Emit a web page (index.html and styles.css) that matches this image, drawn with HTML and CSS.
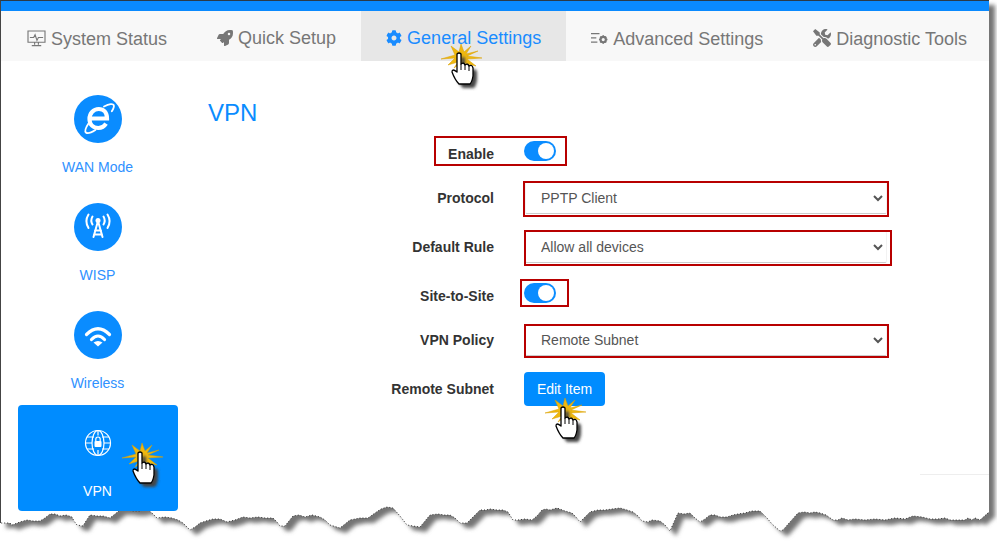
FILE: index.html
```html
<!DOCTYPE html>
<html lang="en">
<head>
<meta charset="utf-8">
<title>VPN</title>
<link rel="stylesheet" href="styles.css">
</head>
<body>
<div class="stage">
  <svg class="tear" width="997" height="542" viewBox="0 0 997 542">
    <defs>
      <filter id="soft" x="-5%" y="-5%" width="110%" height="110%"><feGaussianBlur stdDeviation="2"/></filter>
      <filter id="softer" x="-50%" y="-50%" width="200%" height="200%"><feGaussianBlur stdDeviation="1.5"/></filter>
      <path id="sheet" d="M0 0H989V512L980 520 975 518 972 520 968 518 965 520 960 520 950 520 945 518 938 519 930 519 922 517 913 516 905 519 895 518 885 520 875 519 865 520 855 519 848 520 842 518 838 520 833 520 826 515 820 513 815 512 810 513 804 512 798 513 790 522 783 530 780 531 772 524 767 518 760 511 752 511 745 513 738 514 733 515 727 517 720 517 715 515 710 515 705 519 700 522 695 518 690 513 684 514 678 513 674 522 670 531 665 525 660 521 652 520 648 522 642 521 638 516 633 512 627 510 620 508 612 509 605 510 598 510 590 512 585 517 580 522 576 517 572 513 565 511 557 508 550 510 546 509 542 510 537 516 532 520 525 519 518 520 513 520 508 512 503 510 497 510 490 509 486 510 480 510 473 517 467 523 460 523 455 518 450 515 444 515 438 514 430 515 425 521 420 527 413 526 407 525 400 516 393 508 387 507 381 509 375 513 368 518 360 518 350 520 345 524 340 528 330 525 325 520 320 517 312 515 305 517 299 515 293 516 289 521 285 526 280 526 277 522 273 518 265 518 258 517 250 518 243 517 235 520 227 522 220 519 213 519 206 521 200 523 195 527 190 530 186 526 183 523 178 520 172 518 165 517 157 518 152 513 147 509 140 511 133 511 127 510 120 510 115 514 110 518 103 516 97 516 90 515 86 521 83 526 77 525 74 521 72 517 66 515 60 516 55 514 50 514 45 518 40 521 33 521 27 520 20 522 12 525 10 523H0Z"/>
      <path id="edge" d="M988 513L980 520 975 518 972 520 968 518 965 520 960 520 950 520 945 518 938 519 930 519 922 517 913 516 905 519 895 518 885 520 875 519 865 520 855 519 848 520 842 518 838 520 833 520 826 515 820 513 815 512 810 513 804 512 798 513 790 522 783 530 780 531 772 524 767 518 760 511 752 511 745 513 738 514 733 515 727 517 720 517 715 515 710 515 705 519 700 522 695 518 690 513 684 514 678 513 674 522 670 531 665 525 660 521 652 520 648 522 642 521 638 516 633 512 627 510 620 508 612 509 605 510 598 510 590 512 585 517 580 522 576 517 572 513 565 511 557 508 550 510 546 509 542 510 537 516 532 520 525 519 518 520 513 520 508 512 503 510 497 510 490 509 486 510 480 510 473 517 467 523 460 523 455 518 450 515 444 515 438 514 430 515 425 521 420 527 413 526 407 525 400 516 393 508 387 507 381 509 375 513 368 518 360 518 350 520 345 524 340 528 330 525 325 520 320 517 312 515 305 517 299 515 293 516 289 521 285 526 280 526 277 522 273 518 265 518 258 517 250 518 243 517 235 520 227 522 220 519 213 519 206 521 200 523 195 527 190 530 186 526 183 523 178 520 172 518 165 517 157 518 152 513 147 509 140 511 133 511 127 510 120 510 115 514 110 518 103 516 97 516 90 515 86 521 83 526 77 525 74 521 72 517 66 515 60 516 55 514 50 514 45 518 40 521 33 521 27 520 20 522 12 525 10 523H0"/>
      <g id="hand">
        <polygon class="burst" transform="translate(2 3)" points="21,2 6,3 15,10 3,7 6,14 0,7 -7,12 -3,6 -13,9 -6,2 -20,3 -6,-1 -10,-10 -2,-4 0,-12 3,-4 10,-10 5,-2 17,-5 6,0"/>
        <path class="hand-shadow" filter="url(#softer)" transform="translate(4 4)" d="M-2 1Q0-1 2 1L2 11Q5 9 6 12Q9 10 10 13Q13 11 14 15L14 23Q13 29 11 31L0 31Q-4 27-7 19Q-7 15-2 19Z"/>
        <path class="hand-body" d="M-2 1Q0-1 2 1L2 11Q5 9 6 12Q9 10 10 13Q13 11 14 15L14 23Q13 29 11 31L0 31Q-4 27-7 19Q-7 15-2 19Z"/>
        <path class="hand-line" d="M2 11V17M6 12V17M10 13V18"/>
      </g>
    </defs>
    <use href="#sheet" class="sheet-shadow" transform="translate(6 5)" filter="url(#soft)"/>
    <use href="#sheet" class="sheet"/>
    <use href="#edge" class="sheet-edge"/>
  </svg>

  <div class="window">
    <div class="topbar"></div>
    <nav class="tabs">
      <a class="tab">
        <svg class="ic ic-monitor" viewBox="0 0 20 18"><path class="ln" d="M1 1h18v12H1zM8 13v2.500M12 13v2.500M5 16.500h10M3 8h4l1.500-3 2 6 1.500-3h5"/></svg>
        <span class="tab-text tab-low">System Status</span>
      </a>
      <a class="tab">
        <svg class="ic ic-rocket" viewBox="0 0 512 512"><path d="M505.05 19.1a15.89 15.89 0 0 0-12.2-12.2C460.65 0 435.46 0 410.36 0c-103.2 0-165.1 55.2-211.29 128H94.87A48 48 0 0 0 52 154.49l-49.42 98.8A24 24 0 0 0 24.07 288h103.77l-22.47 22.47a32 32 0 0 0 0 45.25l50.9 50.91a32 32 0 0 0 45.26 0L224 384.16V488a24 24 0 0 0 34.7 21.49l98.7-49.39a47.91 47.91 0 0 0 26.5-42.9V312.79c72.59-46.3 128-108.4 128-211.09.1-25.2.1-50.4-6.85-82.6zM384 168a40 40 0 1 1 40-40 40 40 0 0 1-40 40z"/></svg>
        <span class="tab-text">Quick Setup</span>
      </a>
      <a class="tab tab-active">
        <svg class="ic ic-gear" viewBox="0 0 512 512"><path d="M487.4 315.7l-42.6-24.6c4.3-23.2 4.3-47 0-70.2l42.6-24.6c4.9-2.8 7.1-8.6 5.500-14-11.1-35.6-30-67.8-54.7-94.6-3.8-4.1-10-5.100-14.8-2.300L380.8 110c-17.9-15.4-38.5-27.3-60.8-35.1V25.800c0-5.600-3.900-10.500-9.400-11.700-36.700-8.200-74.300-7.800-109.200 0-5.500 1.200-9.400 6.100-9.400 11.700V75c-22.200 7.900-42.800 19.800-60.800 35.100L88.700 85.500c-4.900-2.800-11-1.900-14.800 2.300-24.700 26.700-43.600 58.900-54.700 94.600-1.700 5.400.6 11.200 5.500 14L67.300 221c-4.300 23.200-4.300 47 0 70.200l-42.600 24.600c-4.900 2.800-7.100 8.600-5.500 14 11.100 35.600 30 67.800 54.700 94.600 3.800 4.100 10 5.100 14.800 2.300l42.600-24.600c17.900 15.400 38.500 27.300 60.800 35.100v49.200c0 5.600 3.900 10.500 9.400 11.700 36.700 8.200 74.300 7.800 109.200 0 5.500-1.200 9.400-6.100 9.400-11.700v-49.200c22.200-7.900 42.800-19.800 60.800-35.100l42.600 24.600c4.900 2.800 11 1.900 14.800-2.300 24.700-26.700 43.600-58.900 54.700-94.600 1.500-5.500-.7-11.300-5.600-14.100zM256 336c-44.100 0-80-35.900-80-80s35.900-80 80-80 80 35.900 80 80-35.900 80-80 80z"/></svg>
        <span class="tab-text">General Settings</span>
      </a>
      <a class="tab">
        <svg class="ic ic-adv" viewBox="0 0 16 12"><path class="ln" d="M0 1.500h8M0 5.500h5M0 9.500h6"/><circle class="cog-ring" cx="11.500" cy="7" r="2.500"/><path class="ln cog-teeth" d="M11.500 3v1.500M11.500 9.500V11M7.500 7H9M14 7h1.500M8.700 4.200l1 1M13.300 8.800l1 1M14.300 4.200l-1 1M9.700 8.800l-1 1"/></svg>
        <span class="tab-text tab-low">Advanced Settings</span>
      </a>
      <a class="tab">
        <svg class="ic ic-tools" viewBox="0 0 512 512"><path d="M501.1 395.7L384 278.6c-23.1-23.1-57.6-27.6-85.4-13.9L192 158.1V96L64 0 0 64l96 128h62.1l106.6 106.6c-13.6 27.8-9.2 62.3 13.9 85.4l117.1 117.1c14.6 14.6 38.2 14.6 52.7 0l52.7-52.7c14.5-14.6 14.5-38.2 0-52.7zM331.7 225c28.3 0 54.9 11 74.9 31l19.4 19.4c15.8-6.9 30.8-16.5 43.8-29.5 37.1-37.1 49.7-89.3 37.9-136.7-2.2-9-13.5-12.1-20.1-5.5l-74.4 74.4-67.9-11.3L334 98.9l74.4-74.4c6.6-6.6 3.4-17.9-5.7-20.2-47.4-11.7-99.6.9-136.6 37.9-28.5 28.5-41.9 66.1-41.2 103.6l82.1 82.1c8.1-1.9 16.5-2.9 24.7-2.9zm-103.9 82l-56.7-56.7L18.7 402.8c-25 25-25 65.5 0 90.5s65.5 25 90.5 0l123.6-123.6c-7.6-19.9-9.900-41.6-5-62.7zM64 472c-13.2 0-24-10.8-24-24 0-13.300 10.700-24 24-24s24 10.700 24 24c0 13.200-10.700 24-24 24z"/></svg>
        <span class="tab-text tab-low">Diagnostic Tools</span>
      </a>
    </nav>

    <div class="content">
      <aside class="side">
        <a class="side-item">
          <svg class="disc" viewBox="0 0 48 48">
            <circle class="disc-bg" cx="24" cy="24" r="24"/>
            <path class="e-stroke" d="M17.500 23.500h15.500c0-6-3.500-9.500-8.200-9.500-5.400 0-9.300 4.500-9.300 10s3.700 9 8.800 9c3.500 0 6-1.600 7.700-4.300"/>
            <path class="orbit" d="M30 11.500c5.500-2.800 9-3 9.800-1.300 .5 1.300-.3 3.300-2 6M14.500 28.500c-3 4.500-3.800 7.800-2.600 9 1.400 1.300 5 .4 9.500-2.500"/>
          </svg>
          <span class="side-label">WAN Mode</span>
        </a>
        <a class="side-item">
          <svg class="disc" viewBox="0 0 48 48">
            <circle class="disc-bg" cx="24" cy="24" r="24"/>
            <circle class="w-fill" cx="24" cy="17.500" r="2.500"/>
            <path class="w-stroke" d="M24 18L19.500 34M24 18L28.500 34M21 27.500h6M20 31.500h8"/>
            <path class="w-stroke" d="M18.500 13.500c-1.500 2.500-1.500 5.500 0 8M29.500 13.500c1.500 2.500 1.500 5.500 0 8M14.500 11.500c-2.500 4-2.500 9.500 0 13.500M33.500 11.500c2.500 4 2.500 9.500 0 13.500"/>
          </svg>
          <span class="side-label">WISP</span>
        </a>
        <a class="side-item">
          <svg class="disc" viewBox="0 0 48 48">
            <circle class="disc-bg" cx="24" cy="24" r="24"/>
            <path class="w-arc" d="M12.500 23.500Q24 12 35.500 23.500M17.500 28.500Q24 21.500 30.500 28.500"/>
            <path class="w-fill" d="M19.500 31.500Q24 28.500 28.500 31.500L24 35.500Z"/>
          </svg>
          <span class="side-label">Wireless</span>
        </a>
        <a class="side-item side-item-active">
          <svg class="globe" viewBox="0 0 28 28">
            <circle class="g-ln" cx="14" cy="14" r="12.500"/>
            <ellipse class="g-ln" cx="14" cy="14" rx="6" ry="12.500"/>
            <path class="g-ln" d="M14 1.500v5M14 21v5.500M3 8h7M18 8h7M1.500 14h6.500M20 14h6.500M3 20h7M18 20h7"/>
            <rect class="w-fill" x="10.500" y="12" width="7" height="6" rx="1"/>
            <path class="g-ln" d="M11.800 12v-1.800a2.200 2.200 0 0 1 4.400 0V12"/>
          </svg>
          <span class="side-label">VPN</span>
        </a>
      </aside>

      <main class="main">
        <h1 class="title">VPN</h1>
        <form class="form">
          <label class="lbl">Enable</label>
          <div class="ctl"><span class="toggle"></span></div>
          <label class="lbl">Protocol</label>
          <div class="ctl"><select class="sel"><option>PPTP Client</option></select></div>
          <label class="lbl">Default Rule</label>
          <div class="ctl"><select class="sel"><option>Allow all devices</option></select></div>
          <label class="lbl">Site-to-Site</label>
          <div class="ctl"><span class="toggle"></span></div>
          <label class="lbl">VPN Policy</label>
          <div class="ctl"><select class="sel"><option>Remote Subnet</option></select></div>
          <label class="lbl">Remote Subnet</label>
          <div class="ctl"><button type="button" class="btn">Edit Item</button></div>
        </form>
      </main>
    </div>
  </div>

  <div class="rule"></div>
  <div class="mark mark-enable"></div>
  <div class="mark mark-protocol"></div>
  <div class="mark mark-default"></div>
  <div class="mark mark-site"></div>
  <div class="mark mark-policy"></div>

  <svg class="pointer pointer-tab" width="60" height="60" viewBox="-25 -15 60 60"><use href="#hand"/></svg>
  <svg class="pointer pointer-side" width="60" height="60" viewBox="-25 -15 60 60"><use href="#hand"/></svg>
  <svg class="pointer pointer-btn" width="60" height="60" viewBox="-25 -15 60 60"><use href="#hand"/></svg>
</div>
</body>
</html>
```
FILE: styles.css
```css
* { box-sizing: border-box; }
html, body { margin: 0; padding: 0; background: #fff; overflow: hidden; }
body { font-family: "Liberation Sans", Arial, sans-serif; }

.stage { position: relative; width: 997px; height: 542px; overflow: hidden; background: #fff; }

.tear { position: absolute; left: 0; top: 0; }
.sheet-shadow { fill: #747474; }
.sheet { fill: #fff; }
.sheet-edge { fill: none; stroke: #333; stroke-width: 1; stroke-dasharray: 1 2; }

.window {
  position: relative;
  width: 989px;
  height: 523px;
  border-top: 1px solid #2b3a47;
  border-left: 1px solid #444;
}
.topbar { height: 10px; background: #0a8aff; }

.tabs { display: flex; height: 50px; padding-left: 1px; background: #f8f8f8; overflow: hidden; }
.tab { display: flex; flex: none; align-items: center; gap: 5px; padding: 6px 25px 0; color: #777; font-size: 18px; white-space: nowrap; }
.tab-text { line-height: 20px; position: relative; top: -1px; }
.tab-low { top: 0; }
.tab-active { background: #e7e7e7; color: #1a8cff; }
.ic { display: block; fill: currentColor; flex: none; position: relative; top: -1px; }
.ic-monitor { width: 19px; height: 17px; }
.ic-rocket { width: 16px; height: 16px; }
.ic-gear { width: 16px; height: 16px; }
.ic-adv { width: 17px; height: 13px; }
.ic-tools { width: 18px; height: 18px; }
.ln { fill: none; stroke: currentColor; stroke-width: 1.200; }
.cog-ring { fill: none; stroke: currentColor; stroke-width: 2; }
.cog-teeth { stroke-width: 1.500; }

.content { display: flex; }
.side { width: 177px; padding: 20px 0 0 17px; display: flex; flex-direction: column; gap: 2px; flex: none; }
.side-item {
  width: 160px;
  height: 106px;
  padding: 14px 1px 0 0;
  display: flex;
  flex-direction: column;
  align-items: center;
  color: #2f91ff;
  font-size: 14px;
  border-radius: 4px;
}
.disc { width: 48px; height: 48px; display: block; flex: none; }
.disc-bg { fill: #0a8cff; }
.side-label { margin-top: 16px; line-height: 16px; }
.side-item-active { background: #008cff; color: #fff; }
.side-item-active .side-label { margin-top: 26px; }
.globe { width: 28px; height: 28px; display: block; flex: none; margin-top: 10px; }
.g-ln { fill: none; stroke: #fff; stroke-width: 1.200; }
.e-stroke { fill: none; stroke: #fff; stroke-width: 4.200; }
.orbit { fill: none; stroke: #fff; stroke-width: 1.800; stroke-linecap: round; }
.w-fill { fill: #fff; }
.w-stroke { fill: none; stroke: #fff; stroke-width: 2; stroke-linecap: round; }
.w-arc { fill: none; stroke: #fff; stroke-width: 3.200; stroke-linecap: round; }

.main { flex: 1; padding: 38px 0 0 30px; }
.title { margin: 0 0 5px; font-size: 24px; font-weight: 400; line-height: 28px; color: #0a8cff; }

.form {
  display: grid;
  grid-template-columns: 286px 1fr;
  grid-template-rows: 44px 44px 54px 44px 44px 54px;
  column-gap: 30px;
  align-items: center;
}
.lbl { justify-self: end; font-size: 14px; font-weight: 700; color: #333; }
.ctl { display: flex; align-items: center; }

.toggle {
  position: relative;
  display: block;
  width: 32px;
  height: 20px;
  margin-bottom: 6px;
  border-radius: 10px;
  background: #0a8cff;
}
.toggle::after {
  content: "";
  position: absolute;
  right: 2px;
  top: 2px;
  width: 16px;
  height: 16px;
  border-radius: 50%;
  background: #fff;
}

.sel {
  width: 362px;
  height: 32px;
  margin-left: 1px;
  padding: 0 11px;
  font: 14px "Liberation Sans", Arial, sans-serif;
  color: #555;
  background-color: #fff;
  border: 1px solid #f2f2f2;
  border-bottom-color: #ccc;
  border-radius: 2px;
}

.btn {
  width: 81px;
  height: 34px;
  padding: 0;
  border: 0;
  border-radius: 4px;
  background: #008cff;
  color: #fff;
  font: 14px "Liberation Sans", Arial, sans-serif;
}

.rule { position: absolute; left: 920px; top: 474px; width: 69px; height: 1px; background: #eee; }

.mark { position: absolute; border: 2px solid #b80000; }
.mark-enable { left: 434px; top: 136px; width: 133px; height: 30px; }
.mark-protocol { left: 523px; top: 181px; width: 366px; height: 36px; }
.mark-default { left: 524px; top: 230px; width: 368px; height: 36px; }
.mark-site { left: 520px; top: 279px; width: 49px; height: 28px; }
.mark-policy { left: 524px; top: 324px; width: 365px; height: 34px; }

.pointer { position: absolute; overflow: visible; }
.pointer-tab { left: 434px; top: 38px; }
.pointer-side { left: 115px; top: 437px; }
.pointer-btn { left: 538px; top: 392px; }

.burst { fill: #efb80f; stroke: #d89f00; stroke-width: .5; }
.hand-body { fill: #fff; stroke: #000; stroke-width: 1.300; stroke-linejoin: round; }
.hand-line { fill: none; stroke: #000; stroke-width: 1; }
.hand-shadow { fill: #444; }
```
